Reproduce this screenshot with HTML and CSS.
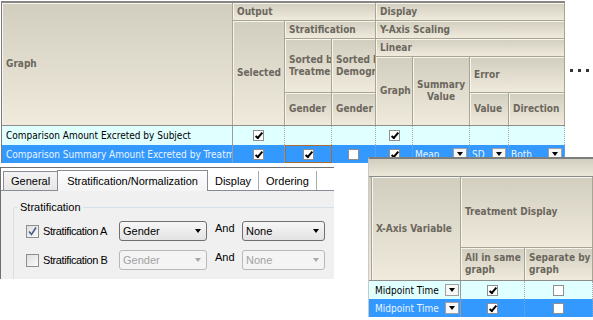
FILE: index.html
```html
<!DOCTYPE html>
<html lang="en">
<head>
    <meta charset="UTF-8">
    <meta name="viewport" content="width=device-width, initial-scale=1.0">
    <title>Graph Options</title>
    <link rel="stylesheet" href="styles.css">
</head>
<body>
<div class="page">
    <div class="top">
        <div class="grid">
            <!-- column headers -->
            <div class="head">
                <div class="hc c-graph b0">Graph</div>
                <div class="hc c-output">Output</div>
                <div class="hc c-display">Display</div>
                <div class="hc c-selected b0">Selected</div>
                <div class="hc c-strat">Stratification</div>
                <div class="hc c-yaxis">Y-Axis Scaling</div>
                <div class="hc c-sortt multi">Sorted by
Treatment</div>
                <div class="hc c-sortd multi">Sorted by
Demographic</div>
                <div class="hc c-linear">Linear</div>
                <div class="hc c-gendt b0">Gender</div>
                <div class="hc c-gendd b0">Gender</div>
                <div class="hc c-dgraph b0">Graph</div>
                <div class="hc c-summary b0 center">Summary Value</div>
                <div class="hc c-error">Error</div>
                <div class="hc c-value b0">Value</div>
                <div class="hc c-direction b0">Direction</div>
            </div>
            <div class="row row-a">
                <div class="dc name">Comparison Amount Excreted by Subject</div>
                <div class="dc"><span class="cb on"></span></div>
                <div class="dc"></div>
                <div class="dc"></div>
                <div class="dc"><span class="cb on"></span></div>
                <div class="dc"></div>
                <div class="dc"></div>
                <div class="dc"></div>
            </div>
            <div class="row row-sel">
                <div class="dc name">Comparison Summary Amount Excreted by Treatment</div>
                <div class="dc"><span class="cb on"></span></div>
                <div class="dc focus"><span class="cb on"></span></div>
                <div class="dc"><span class="cb"></span></div>
                <div class="dc"><span class="cb on"></span></div>
                <div class="dc dd"><span>Mean</span><span class="ddb"></span></div>
                <div class="dc dd"><span>SD</span><span class="ddb"></span></div>
                <div class="dc dd"><span>Both</span><span class="ddb"></span></div>
            </div>
        </div>
        <div class="more"><span></span><span></span><span></span></div>
    </div>

    <div class="tabs">
        <div class="tabstrip">
            <div class="tab first">General</div>
            <div class="tab active">Stratification/Normalization</div>
            <div class="tab">Display</div>
            <div class="tab">Ordering</div>
        </div>
        <div class="tabpage">
            <fieldset>
                <legend>Stratification</legend>
                <div class="opt">
                    <div class="opt-check">
                        <span class="box on">
                            <svg width="11" height="11" viewBox="0 0 11 11"><path d="M2 5.5 L4.5 8.5 L9 1.5" fill="none" stroke="#4a5e8c" stroke-width="1.6"/></svg>
                        </span>
                        <span class="opt-label">Stratification A</span>
                    </div>
                    <div class="combo">Gender</div>
                    <div class="and">And</div>
                    <div class="combo narrow">None</div>
                </div>
                <div class="opt">
                    <div class="opt-check">
                        <span class="box"></span>
                        <span class="opt-label">Stratification B</span>
                    </div>
                    <div class="combo off">Gender</div>
                    <div class="and">And</div>
                    <div class="combo narrow off">None</div>
                </div>
            </fieldset>
        </div>
    </div>

    <!-- second grid, pasted over the first one -->
    <div class="xpanel">
        <div class="xbar"></div>
        <div class="xhead">
            <div class="hc x-stub b0"></div>
            <div class="hc x-var b0">X-Axis Variable</div>
            <div class="hc x-treat">Treatment Display</div>
            <div class="hc x-all b0 multi">All in same
graph</div>
            <div class="hc x-sep b0 multi">Separate by
graph</div>
        </div>
        <div class="xrow row-a">
            <div class="dc dd xname"><span>Midpoint Time</span><span class="ddb"></span></div>
            <div class="dc"><span class="cb on"></span></div>
            <div class="dc"><span class="cb"></span></div>
        </div>
        <div class="xrow row-sel">
            <div class="dc dd xname"><span>Midpoint Time</span><span class="ddb"></span></div>
            <div class="dc"><span class="cb on"></span></div>
            <div class="dc"><span class="cb"></span></div>
        </div>
    </div>
</div>
</body>
</html>
```

FILE: styles.css
```css
body {
    margin: 0;
    background: #fff;
    font-family: "DejaVu Sans Condensed", "DejaVu Sans", sans-serif;
    font-size: 10px;
}
.page {
    position: relative;
    width: 593px;
    height: 320px;
    overflow: hidden;
}
.top {
    display: flex;
    align-items: flex-start;
    height: 162px;
}

/* data grid */
.grid {
    margin: 1px 0 0 1px;
    border-top: 2px solid #868686;
    border-left: 1px solid #7c7c7c;
    width: 563px;
}
.head {
    display: grid;
    grid-template-columns: 231px 52px 47px 44px 37px 57px 39px 56px;
    grid-template-rows: 18px 18px 18px 36px 32px;
    border-bottom: 1px solid #8d8d8d;
}
.hc {
    box-sizing: border-box;
    display: flex;
    align-items: center;
    padding: 0 4px;
    border-right: 1px solid #a9a595;
    border-bottom: 1px solid #a9a595;
    box-shadow: inset 1px 1px 0 #f7f4ec;
    background: linear-gradient(#d2cebf, #efeadb);
    color: #6b675d;
    font-weight: bold;
    line-height: 12px;
    white-space: nowrap;
    overflow: hidden;
}
.hc.b0 { border-bottom: none; }
.hc.multi { white-space: pre; }
.hc.center { text-align: center; justify-content: center; white-space: normal; }

.c-graph { grid-column: 1; grid-row: 1 / 6; }
.c-output { grid-column: 2 / 5; grid-row: 1; }
.c-display { grid-column: 5 / 9; grid-row: 1; }
.c-selected { grid-column: 2; grid-row: 2 / 6; }
.c-strat { grid-column: 3 / 5; grid-row: 2; }
.c-yaxis { grid-column: 5 / 9; grid-row: 2; }
.c-sortt { grid-column: 3; grid-row: 3 / 5; }
.c-sortd { grid-column: 4; grid-row: 3 / 5; }
.c-linear { grid-column: 5 / 9; grid-row: 3; }
.c-gendt { grid-column: 3; grid-row: 5; }
.c-gendd { grid-column: 4; grid-row: 5; }
.c-dgraph { grid-column: 5; grid-row: 4 / 6; }
.c-summary { grid-column: 6; grid-row: 4 / 6; }
.c-error { grid-column: 7 / 9; grid-row: 4; }
.c-value { grid-column: 7; grid-row: 5; }
.c-direction { grid-column: 8; grid-row: 5; }

.row {
    display: grid;
    grid-template-columns: 231px 52px 47px 44px 37px 57px 39px 56px;
    height: 19px;
}
.row-a {
    background: #e0ffff;
    color: #000;
}
.row-sel {
    background: #3399ff;
    color: #eaf4ff;
}
.row.row-sel { height: 18px; }
.dc {
    box-sizing: border-box;
    display: flex;
    align-items: center;
    justify-content: center;
    border-right: 1px dotted #a8a8a8;
    overflow: hidden;
}
.row-sel .dc { border-right-color: #7aa6d4; }
.dc.name {
    justify-content: flex-start;
    padding-left: 4px;
    border-right: 1px solid #9b9b9b;
    white-space: nowrap;
}
.dc.dd {
    justify-content: space-between;
    padding: 0 2px 0 2px;
}
.dc.focus {
    outline: 1px solid #a96c36;
    outline-offset: -1px;
}

.cb {
    position: relative;
    box-sizing: border-box;
    width: 11px;
    height: 11px;
    border: 1px solid #8f8f8f;
    background: #fff;
}
.cb.on::after {
    content: "";
    position: absolute;
    left: 3px;
    top: 0;
    width: 2px;
    height: 6px;
    border: solid #000;
    border-width: 0 2px 2px 0;
    transform: rotate(40deg);
}
.ddb {
    box-sizing: border-box;
    display: flex;
    align-items: center;
    justify-content: center;
    width: 14px;
    height: 12px;
    border: 1px solid #a0a0a0;
    background: #f7f7f7;
}
.ddb::after {
    content: "";
    border-left: 3.5px solid transparent;
    border-right: 3.5px solid transparent;
    border-top: 4px solid #000;
}

.more {
    display: flex;
    gap: 5px;
    margin: 69px 0 0 5px;
}
.more span {
    width: 3px;
    height: 3px;
    background: #333;
}

/* options dialog */
.tabs {
    box-sizing: border-box;
    width: 334px;
    height: 112px;
    margin-top: 5px;
    border-top: 1px solid #6f6f6f;
    border-left: 1px solid #6f6f6f;
    overflow: hidden;
    font-family: "Liberation Sans", Arial, sans-serif;
    font-size: 11px;
    color: #000;
}
.tabstrip {
    display: flex;
    align-items: flex-end;
    height: 22px;
    padding-left: 2px;
    border-bottom: 1px solid #898c95;
    background: #fff;
}
.tab {
    box-sizing: border-box;
    display: flex;
    align-items: center;
    height: 19px;
    padding: 0 7px;
    border-right: 1px solid #a7a9ae;
    background: #fff;
}
.tab.first {
    border: 1px solid #898c95;
    border-bottom: none;
    background: linear-gradient(#f4f4f4, #e6e6e6);
    padding: 0 7px;
}
.tab.active {
    position: relative;
    z-index: 1;
    height: 21px;
    margin: 0 0 -1px -1px;
    padding: 0 9px;
    border: 1px solid #898c95;
    border-bottom: none;
    background: linear-gradient(#fdfdfd, #f4f4f4);
}
.tabpage {
    height: 88px;
    padding: 10px 0 0 12px;
    background: #f0f0f0;
}
fieldset {
    width: 360px;
    height: 100px;
    margin: 0;
    padding: 7px 0 0 0;
    border: 1px solid #d5dfe5;
    border-radius: 3px;
}
legend {
    margin-left: 4px;
    padding: 0 2px;
    line-height: 13px;
}
.opt {
    display: flex;
    align-items: center;
    height: 20px;
    margin-left: 12px;
}
.opt + .opt { margin-top: 9px; }
.opt-check {
    display: flex;
    align-items: center;
    width: 93px;
}
.box {
    box-sizing: border-box;
    display: flex;
    align-items: center;
    justify-content: center;
    width: 13px;
    height: 13px;
    border: 1px solid #8e8f8f;
    background: linear-gradient(135deg, #dedede, #fbfbfb);
}
.opt-label {
    margin-left: 4px;
    letter-spacing: -0.4px;
}
.combo {
    box-sizing: border-box;
    display: flex;
    align-items: center;
    justify-content: space-between;
    width: 88px;
    height: 20px;
    padding: 0 5px 0 3px;
    border: 1px solid #707070;
    border-radius: 3px;
    background: linear-gradient(#f7f7f7, #e3e3e3);
}
.combo.narrow { width: 83px; }
.combo::after {
    content: "";
    border-left: 3.5px solid transparent;
    border-right: 3.5px solid transparent;
    border-top: 4px solid #000;
}
.combo.off {
    border-color: #b8b8b8;
    background: #f4f4f4;
    color: #a2a2a2;
}
.combo.off::after { border-top-color: #a8a8a8; }
.and {
    align-self: flex-start;
    width: 27px;
    margin: 1px 0 0 8px;
}

/* second grid */
.xpanel {
    position: absolute;
    left: 368px;
    top: 157px;
    width: 225px;
    border-top: 2px solid #7d7d7d;
    border-left: 1px solid #c9c9c9;
    background: #fff;
}
.xbar {
    height: 17px;
    border-bottom: 1px solid #8b8b8b;
    background: linear-gradient(#d2cebf, #ece8d9);
}
.xhead {
    display: grid;
    grid-template-columns: 3px 89px 64px 68px;
    grid-template-rows: 71px 32px;
    border-bottom: 1px solid #8d8d8d;
}
.x-stub { grid-column: 1; grid-row: 1 / 3; padding: 0; box-shadow: none; }
.x-var { grid-column: 2; grid-row: 1 / 3; }
.x-treat { grid-column: 3 / 5; grid-row: 1; }
.x-all { grid-column: 3; grid-row: 2; }
.x-sep { grid-column: 4; grid-row: 2; }
.xrow {
    display: grid;
    grid-template-columns: 92px 64px 68px;
    height: 18px;
}
.xrow .dc.xname {
    padding: 0 1px 0 6px;
    border-right: 1px solid #9b9b9b;
    white-space: nowrap;
}
```
